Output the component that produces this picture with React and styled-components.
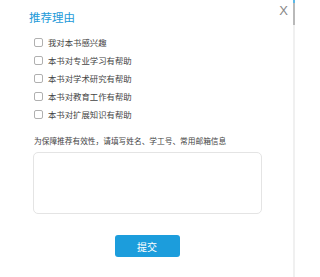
import React, { useState } from 'react';
import styled, { createGlobalStyle } from 'styled-components';

const GlobalStyle = createGlobalStyle`
  html, body {
    margin: 0;
    padding: 0;
    background: #fff;
  }
  body {
    font-family: "Microsoft YaHei", "Noto Sans CJK SC", "Noto Sans", sans-serif;
    color: #333;
  }
`;

const Page = styled.div`
  display: flex;
  width: 295px;
  height: 277px;
  overflow: hidden;
`;

const Dialog = styled.div`
  flex: 1;
  display: flex;
  flex-direction: column;
  padding: 0 5px 0 29px;
`;

const Header = styled.div`
  display: flex;
  justify-content: space-between;
  align-items: flex-start;
`;

const Title = styled.div`
  margin-top: 9px;
  font-size: 11.5px;
  line-height: 16px;
  color: #1d9ad9;
`;

const Close = styled.button`
  margin-top: 4px;
  padding: 0;
  border: 0;
  background: none;
  font-family: "Liberation Sans", Arial, sans-serif;
  font-size: 13px;
  line-height: 14px;
  color: #888;
  cursor: pointer;
`;

const Options = styled.div`
  display: flex;
  flex-direction: column;
  gap: 7px;
  margin-top: 12px;
  padding-left: 5px;
`;

const Option = styled.label`
  display: flex;
  align-items: center;
  gap: 5px;
  height: 11px;
  font-size: 8.4px;
  line-height: 11px;
  color: #444;
  cursor: pointer;
`;

const Box = styled.span`
  width: 7px;
  height: 7px;
  border: 1px solid #b0b0b0;
  border-radius: 2px;
  background: ${(p) => (p.checked ? '#1d9ad9' : '#fff')};
  flex-shrink: 0;
`;

const Hint = styled.div`
  margin-top: 15px;
  padding-left: 5px;
  font-size: 7.7px;
  line-height: 11px;
  color: #444;
  white-space: nowrap;
`;

const Input = styled.textarea`
  box-sizing: border-box;
  margin: 6px 0 0 4px;
  width: 229px;
  height: 62px;
  border: 1px solid #e4e4e4;
  border-radius: 5px;
  resize: none;
  outline: none;
  font-family: inherit;
  font-size: 9px;
`;

const Footer = styled.div`
  display: flex;
  justify-content: center;
  width: 236px;
  margin-top: 21px;
`;

const Submit = styled.button`
  width: 65px;
  height: 22px;
  border: 0;
  border-radius: 3px;
  background: #1c9ddc;
  color: #fff;
  font-family: inherit;
  font-size: 10px;
  padding: 0;
  cursor: pointer;
`;

const Rail = styled.div`
  width: 2px;
  display: flex;
  flex-direction: column;
  background: #f0f0f0;
`;

const RailPart = styled.div`
  height: ${(p) => p.h}px;
  background: ${(p) => p.color};
`;

const reasons = [
  '我对本书感兴趣',
  '本书对专业学习有帮助',
  '本书对学术研究有帮助',
  '本书对教育工作有帮助',
  '本书对扩展知识有帮助',
];

const App = () => {
  const [checked, setChecked] = useState([]);

  const toggle = (i) => {
    setChecked((c) => (c.includes(i) ? c.filter((x) => x !== i) : [...c, i]));
  };

  return (
    <Page>
      <GlobalStyle />
      <Dialog>
        <Header>
          <Title>推荐理由</Title>
          <Close>X</Close>
        </Header>
        <Options>
          {reasons.map((r, i) => (
            <Option key={r} onClick={() => toggle(i)}>
              <Box checked={checked.includes(i)} />
              {r}
            </Option>
          ))}
        </Options>
        <Hint>为保障推荐有效性，请填写姓名、学工号、常用邮箱信息</Hint>
        <Input />
        <Footer>
          <Submit>提交</Submit>
        </Footer>
      </Dialog>
      <Rail>
        <RailPart h={3} color="#5bb8e6" />
        <RailPart h={22} color="#b9b9b9" />
      </Rail>
    </Page>
  );
};

export default App;
